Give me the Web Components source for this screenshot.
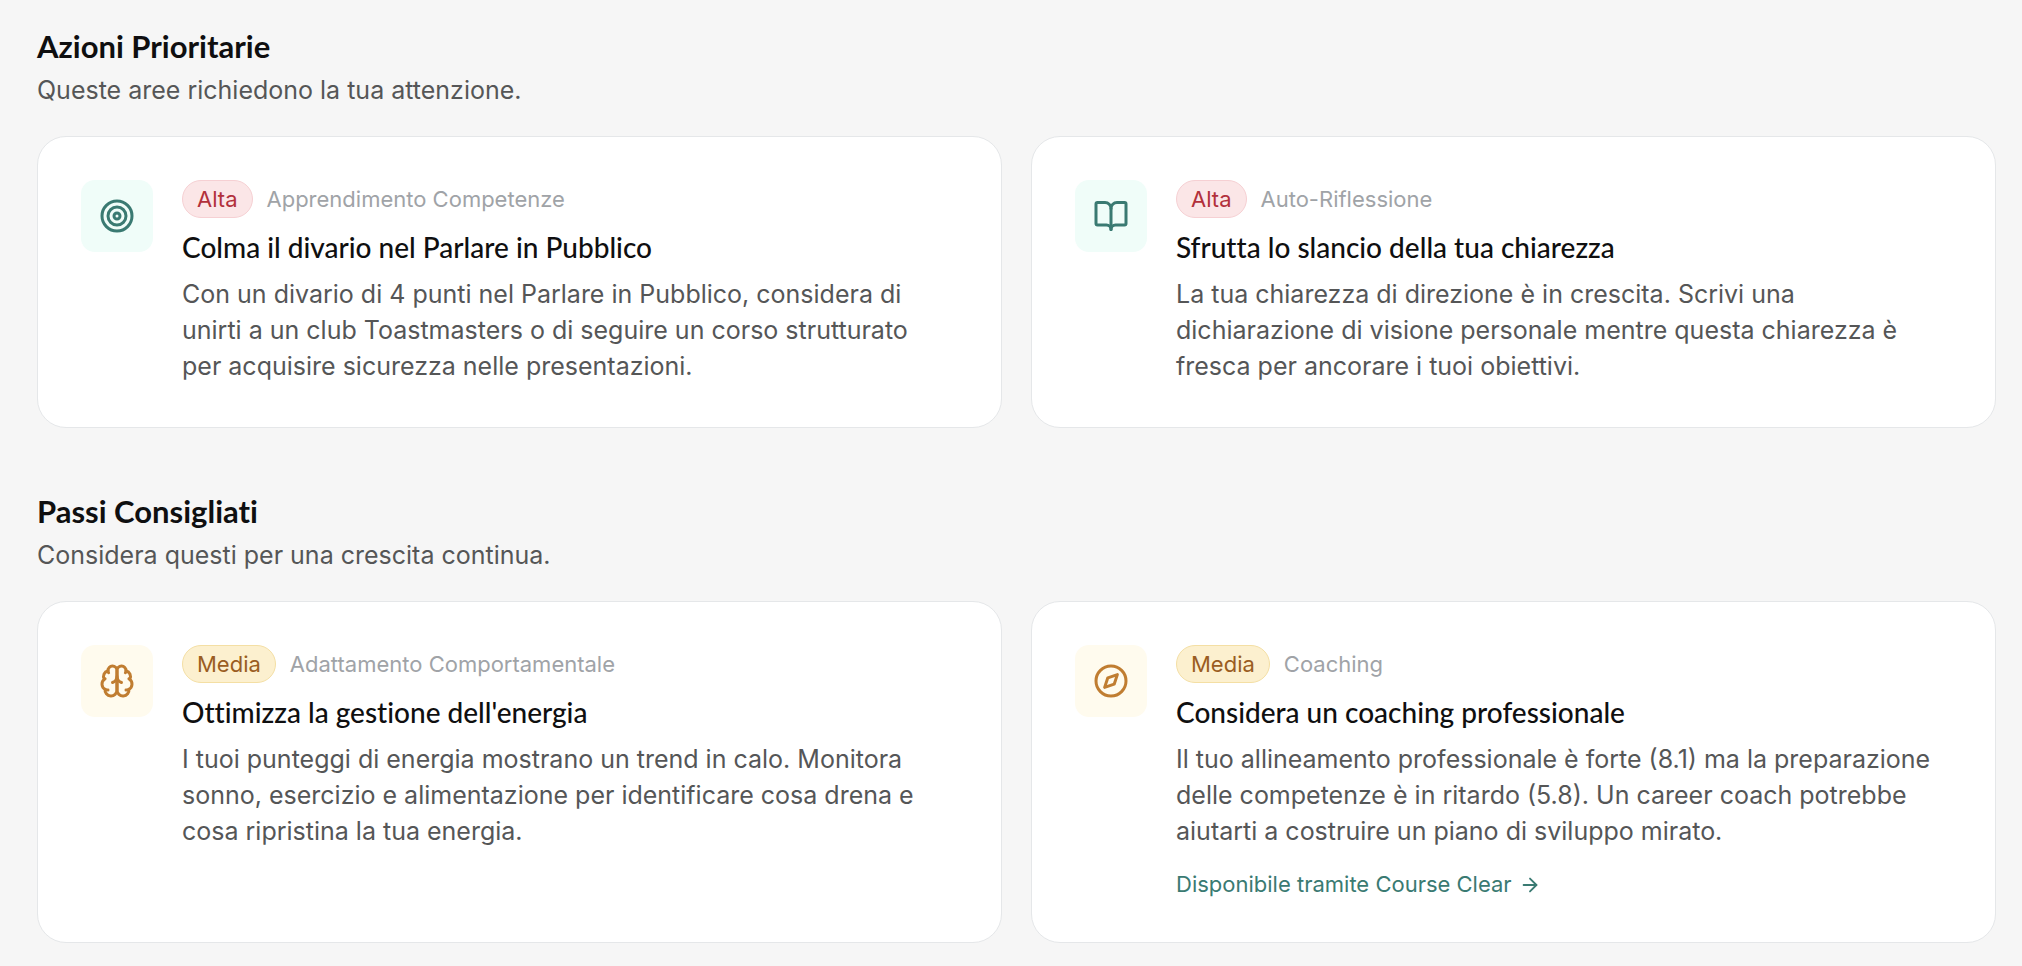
<!DOCTYPE html>
<html lang="it">
<head>
<meta charset="utf-8">
<meta name="viewport" content="width=device-width, initial-scale=1">
<title>Azioni Prioritarie</title>
<style>
:root {
  --page: #f6f6f6;
  --ink: #0f0f10;
  --body: #555657;
  --muted: #a0a3a7;
  --line: #e5e7e9;
  --teal: #3a7a72;
  --heading-font: Lato, "Open Sans", sans-serif;
}

body {
  margin: 0;
  background: var(--page);
  color: var(--body);
  font: 400 25px/36px Inter, "Liberation Sans", sans-serif;
}
</style>
</head>
<body>

<action-board>
  <action-section heading="Azioni Prioritarie" subtitle="Queste aree richiedono la tua attenzione.">
    <action-card icon="target" priority="alta" category="Apprendimento Competenze" heading="Colma il divario nel Parlare in Pubblico">
      Con un divario di 4 punti nel Parlare in Pubblico, considera di unirti a un club Toastmasters o di seguire un corso strutturato per acquisire sicurezza nelle presentazioni.
    </action-card>
    <action-card icon="book" priority="alta" category="Auto-Riflessione" heading="Sfrutta lo slancio della tua chiarezza">
      La tua chiarezza di direzione è in crescita. Scrivi una dichiarazione di visione personale mentre questa chiarezza è fresca per ancorare i tuoi obiettivi.
    </action-card>
  </action-section>

  <action-section heading="Passi Consigliati" subtitle="Considera questi per una crescita continua.">
    <action-card icon="brain" priority="media" category="Adattamento Comportamentale" heading="Ottimizza la gestione dell'energia">
      I tuoi punteggi di energia mostrano un trend in calo. Monitora sonno, esercizio e alimentazione per identificare cosa drena e cosa ripristina la tua energia.
    </action-card>
    <action-card icon="compass" priority="media" category="Coaching" heading="Considera un coaching professionale">
      Il tuo allineamento professionale è forte (8.1) ma la preparazione delle competenze è in ritardo (5.8). Un career coach potrebbe aiutarti a costruire un piano di sviluppo mirato.
      <arrow-link slot="link" href="#course-clear">Disponibile tramite Course Clear</arrow-link>
    </action-card>
  </action-section>
</action-board>

<script>
const icons = {
  target: '<circle cx="12" cy="12" r="10"/><circle cx="12" cy="12" r="6"/><circle cx="12" cy="12" r="2"/>',
  book: '<path d="M12 7v14"/><path d="M3 18a1 1 0 0 1-1-1V4a1 1 0 0 1 1-1h5a4 4 0 0 1 4 4 4 4 0 0 1 4-4h5a1 1 0 0 1 1 1v13a1 1 0 0 1-1 1h-6a3 3 0 0 0-3 3 3 3 0 0 0-3-3z"/>',
  brain: `
    <path d="M12 5a3 3 0 1 0-5.997.125 4 4 0 0 0-2.526 5.77 4 4 0 0 0 .556 6.588A4 4 0 1 0 12 18Z"/>
    <path d="M12 5a3 3 0 1 1 5.997.125 4 4 0 0 1 2.526 5.77 4 4 0 0 1-.556 6.588A4 4 0 1 1 12 18Z"/>
    <path d="M15 13a4.5 4.5 0 0 1-3-4 4.5 4.5 0 0 1-3 4"/>
    <path d="M17.599 6.5a3 3 0 0 0 .399-1.375"/>
    <path d="M6.003 5.125A3 3 0 0 0 6.401 6.5"/>
    <path d="M3.477 10.896a4 4 0 0 1 .585-.396"/>
    <path d="M19.938 10.5a4 4 0 0 1 .585.396"/>
    <path d="M6 18a4 4 0 0 1-1.967-.516"/>
    <path d="M19.967 17.484A4 4 0 0 1 18 18"/>`,
  compass: '<circle cx="12" cy="12" r="10"/><path d="M16.24 7.76l-2.12 6.36-6.36 2.12 2.12-6.36z"/>',
  arrow: '<path d="M5 12h14"/><path d="m12 5 7 7-7 7"/>'
}

const svg = (name) => `
  <svg viewBox="0 0 24 24" fill="none" stroke="currentColor" stroke-width="2" stroke-linecap="round" stroke-linejoin="round" aria-hidden="true">${icons[name] || ""}</svg>`

class ActionBoard extends HTMLElement {
  constructor() {
    super();
    this.attachShadow({ mode: "open" });
    this.shadowRoot.innerHTML = `
<style>
:host {
  display: flex;
  flex-direction: column;
  gap: 64px;
  padding: 27px 26px 24px 37px;
}
</style>
<slot></slot>`;
  }
}

class ActionSection extends HTMLElement {
  constructor() {
    super();
    this.attachShadow({ mode: "open" });
  }

  connectedCallback() {
    this.shadowRoot.innerHTML = `
<style>
:host {
  display: block;
}

.section__title {
  margin: 0 0 7px;
  color: var(--ink);
  font: 700 31px/38px var(--heading-font);
  font-variant-ligatures: none;
}

.section__subtitle {
  margin: 0 0 28px;
}

.section__cards {
  display: grid;
  grid-template-columns: 1fr 1fr;
  gap: 29px;
}

@media (max-width: 1100px) {
  .section__cards {
    grid-template-columns: 1fr;
  }
}
</style>
<section>
  <h2 class="section__title">${this.getAttribute("heading")}</h2>
  <p class="section__subtitle">${this.getAttribute("subtitle")}</p>
  <div class="section__cards"><slot></slot></div>
</section>`;
  }
}

class PriorityBadge extends HTMLElement {
  constructor() {
    super();
    this.attachShadow({ mode: "open" });
    this.shadowRoot.innerHTML = `
<style>
:host {
  display: block;
  padding: 0 14px;
  border: 1px solid #f6d0d3;
  border-radius: 19px;
  background: #fbe6e7;
  color: #b2303b;
  font-size: 22px;
  line-height: 36px;
}

:host([level="media"]) {
  border-color: #f4dfa4;
  background: #fcf0cf;
  color: #9a5d22;
}
</style>
<slot></slot>`;
  }
}

class ActionCard extends HTMLElement {
  constructor() {
    super();
    this.attachShadow({ mode: "open" });
  }

  connectedCallback() {
    const priority = this.getAttribute("priority");
    const label = priority === "alta" ? "Alta" : "Media";

    this.shadowRoot.innerHTML = `
<style>
:host {
  display: block;
  box-sizing: border-box;
  padding: 43px 50px 43px 43px;
  border: 1px solid var(--line);
  border-radius: 29px;
  background: #fff;
}

.card {
  display: flex;
  align-items: flex-start;
  gap: 29px;
}

.card__icon {
  display: grid;
  place-items: center;
  flex: none;
  width: 72px;
  height: 72px;
  border-radius: 14px;
  background: #f0fdf9;
  color: var(--teal);
}

.card__icon--media {
  background: #fffbee;
  color: #c07d31;
}

.card__icon svg {
  width: 36px;
  height: 36px;
}

.card__content {
  flex: 1;
  min-width: 0;
}

.card__meta {
  display: flex;
  align-items: center;
  gap: 14px;
  margin-bottom: 11px;
}

.card__category {
  color: var(--muted);
  font-size: 22px;
}

.card__title {
  margin: 0 0 11px;
  color: var(--ink);
  font: 500 28px/36px var(--heading-font);
  font-variant-ligatures: none;
}

.card__text {
  margin: 0;
}

::slotted([slot="link"]) {
  margin-top: 21px;
}
</style>
<article class="card">
  <div class="card__icon card__icon--${priority}">${svg(this.getAttribute("icon"))}</div>
  <div class="card__content">
    <div class="card__meta">
      <priority-badge level="${priority}">${label}</priority-badge>
      <span class="card__category">${this.getAttribute("category")}</span>
    </div>
    <h3 class="card__title">${this.getAttribute("heading")}</h3>
    <p class="card__text"><slot></slot></p>
    <slot name="link"></slot>
  </div>
</article>`;
  }
}

class ArrowLink extends HTMLElement {
  constructor() {
    super();
    this.attachShadow({ mode: "open" });
  }

  connectedCallback() {
    this.shadowRoot.innerHTML = `
<style>
:host {
  display: flex;
}

a {
  display: flex;
  align-items: center;
  gap: 7px;
  color: var(--teal);
  font-size: 22px;
  line-height: 29px;
  text-decoration: none;
}

a:hover {
  text-decoration: underline;
}

svg {
  width: 22px;
  height: 22px;
}
</style>
<a href="${this.getAttribute("href")}"><slot></slot>${svg("arrow")}</a>`;
  }
}

customElements.define("action-board", ActionBoard);
customElements.define("action-section", ActionSection);
customElements.define("priority-badge", PriorityBadge);
customElements.define("action-card", ActionCard);
customElements.define("arrow-link", ArrowLink);
</script>
</body>
</html>
